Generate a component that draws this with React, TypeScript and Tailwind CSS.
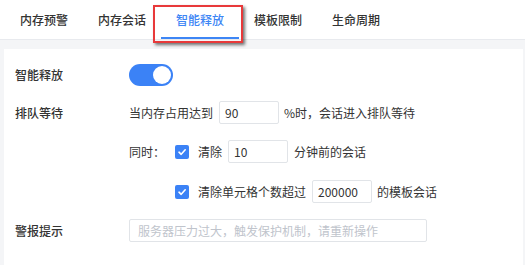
const tabs = ["内存预警", "内存会话", "智能释放", "模板限制", "生命周期"];

const Check = () => (
    <span className="w-[14px] h-[14px] rounded-[2px] bg-[#3b82f6] flex items-center justify-center shrink-0">
        <svg width="10" height="10" viewBox="0 0 10 10" fill="none">
            <path d="M2 5.2 L4.2 7.3 L8.2 2.8" stroke="white" strokeWidth="1.6" strokeLinecap="round" strokeLinejoin="round" />
        </svg>
    </span>
);

const Field = ({ value, w = "w-[60px]" }: { value: string; w?: string }) => (
    <div className={`${w} h-[23px] border border-[#e1e4e8] rounded-[2px] flex items-center pl-[5px] text-[12px] text-[#333]`}>
        {value}
    </div>
);

const App: React.FC = () => {
    return (
        <div
            className="w-[525px] h-[265px] bg-[#f4f5f7] flex flex-col overflow-hidden text-[12px] text-[#333]"
            style={{ fontFamily: '"Noto Sans CJK SC", "Noto Sans", sans-serif' }}
        >
            {/* tab bar */}
            <div className="relative h-[40px] bg-white border-b border-[#e8eaee] flex pl-[5px] shrink-0">
                {tabs.map((t, i) => (
                    <div
                        key={t}
                        className={`relative w-[78px] h-full flex items-center justify-center font-medium ${
                            i === 2 ? "text-[#3d86f5]" : "text-[#333]"
                        }`}
                    >
                        {t}
                        {i === 2 && <span className="absolute left-0 right-0 bottom-0 h-[2px] bg-[#3d86f5]" />}
                    </div>
                ))}
                {/* highlight box */}
                <div className="absolute left-[153px] top-[5px] w-[90px] h-[38px] border-2 border-[#e8393a] shadow-[2px_2px_3px_rgba(0,0,0,0.55)]" />
            </div>

            {/* panel */}
            <div className="flex-1 mt-[9px] ml-[4px] mr-[2px] bg-white pl-[11px] pt-[15px] flex flex-col">
                <div className="flex items-center h-[22px]">
                    <span className="w-[114px] font-medium">智能释放</span>
                    <div className="w-[44px] h-[22px] rounded-full bg-[#3b82f6] flex items-center justify-end pr-[2px]">
                        <span className="w-[18px] h-[18px] rounded-full bg-white" />
                    </div>
                </div>

                <div className="flex items-center h-[23px] mt-[15px]">
                    <span className="w-[114px] font-medium">排队等待</span>
                    <span>当内存占用达到</span>
                    <div className="ml-[6px]"><Field value="90" /></div>
                    <span className="ml-[5px]">%时，会话进入排队等待</span>
                </div>

                <div className="flex items-center h-[23px] mt-[16px] pl-[114px]">
                    <span className="w-[46px]">同时：</span>
                    <Check />
                    <span className="ml-[9px]">清除</span>
                    <div className="ml-[6px]"><Field value="10" /></div>
                    <span className="ml-[6px]">分钟前的会话</span>
                </div>

                <div className="flex items-center h-[23px] mt-[17px] pl-[160px]">
                    <Check />
                    <span className="ml-[9px]">清除单元格个数超过</span>
                    <div className="ml-[6px]"><Field value="200000" /></div>
                    <span className="ml-[5px]">的模板会话</span>
                </div>

                <div className="flex items-center h-[23px] mt-[16px]">
                    <span className="w-[114px] font-medium">警报提示</span>
                    <div className="w-[298px] h-[23px] border border-[#e1e4e8] rounded-[2px] flex items-center pl-[8px] text-[#c0c4cc]">
                        服务器压力过大，触发保护机制，请重新操作
                    </div>
                </div>
            </div>
        </div>
    );
};

export default App;
